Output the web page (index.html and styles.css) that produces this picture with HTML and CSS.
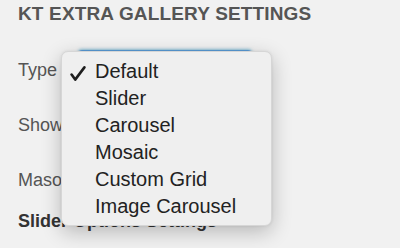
FILE: index.html
```html
<!DOCTYPE html>
<html>
<head>
<meta charset="utf-8">
<link rel="stylesheet" href="styles.css">
</head>
<body>
<div class="page">
  <h2 class="heading">KT EXTRA GALLERY SETTINGS</h2>
  <div class="row row-type">
    <span class="label">Type</span>
    <div class="select"></div>
  </div>
  <div class="row"><span class="label">Show Pagination</span></div>
  <div class="row"><span class="label">Masonry Layout</span></div>
  <div class="row row-bold"><span class="label bold">Slider Options Settings</span></div>

  <ul class="menu">
    <li class="item checked">
      <svg class="check" width="16" height="16" viewBox="0 0 16 16"><path d="M1.6 8.6 L5.2 13.6 L14.4 1.4" fill="none" stroke="#1e1e1e" stroke-width="2.6" stroke-linecap="round" stroke-linejoin="round"/></svg>
      Default
    </li>
    <li class="item">Slider</li>
    <li class="item">Carousel</li>
    <li class="item">Mosaic</li>
    <li class="item">Custom Grid</li>
    <li class="item">Image Carousel</li>
  </ul>
</div>
</body>
</html>
```

FILE: styles.css
```css
html, body {
  margin: 0;
  padding: 0;
  background: #f1f1f1;
  overflow: hidden;
}
.page {
  position: relative;
  width: 400px;
  height: 248px;
  padding: 2px 0 0 18px;
  box-sizing: border-box;
  font-family: "Liberation Sans", Arial, sans-serif;
}
.heading {
  margin: 0;
  font-size: 19px;
  line-height: 24px;
  letter-spacing: 0.15px;
  font-weight: bold;
  color: #555;
  white-space: nowrap;
}
.row {
  margin-top: 33px;
  height: 22px;
  font-size: 18px;
  line-height: 22px;
  color: #555;
  white-space: nowrap;
  position: relative;
}
.row-type { margin-top: 33px; }
.row-bold { margin-top: 19px; }
.bold {
  font-weight: bold;
  color: #333;
}
.select {
  position: absolute;
  left: 60px;
  top: -9px;
  width: 174px;
  height: 30px;
  border-radius: 4px;
  border-top: 2px solid #5b9dd9;
  box-shadow: 0 -1px 3px rgba(30, 140, 190, 0.5);
}
.menu {
  position: absolute;
  left: 61px;
  top: 51px;
  width: 211px;
  height: 175px;
  box-sizing: border-box;
  margin: 0;
  padding: 6px 0 6px 33px;
  list-style: none;
  background: #efefef;
  border: 1px solid #d6d6d6;
  border-radius: 7px;
  box-shadow: 0 6px 20px rgba(0, 0, 0, 0.24), 0 0 3px rgba(0, 0, 0, 0.08);
}
.item {
  position: relative;
  font-size: 20px;
  line-height: 27px;
  height: 27px;
  color: #222;
  white-space: nowrap;
}
.check {
  position: absolute;
  left: -25px;
  top: 8px;
}
```
